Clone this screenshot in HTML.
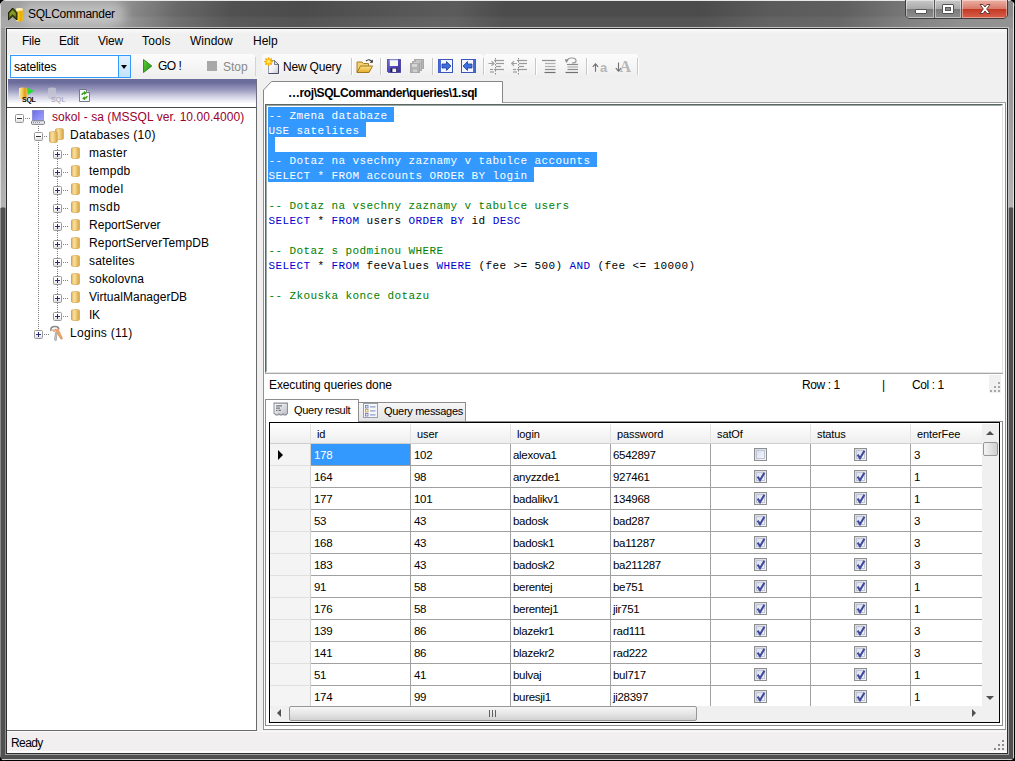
<!DOCTYPE html>
<html><head><meta charset="utf-8"><title>SQLCommander</title>
<style>
*{box-sizing:border-box;margin:0;padding:0}
html,body{width:1015px;height:761px;overflow:hidden;background:#000}
body{font-family:"Liberation Sans",sans-serif;font-size:12px;color:#000;position:relative}
.a{position:absolute}
.menu{position:absolute;top:4px;font-size:12px;line-height:14px;white-space:nowrap}
.ts{position:absolute;top:24px;height:24px;border-radius:3px;background:linear-gradient(180deg,#fcfcfc,#f4f4f4 60%,#eee)}
.sep{position:absolute;top:4px;width:1px;height:17px;background:#c8c8c8;border-right:1px solid #fff;box-sizing:content-box}
.t12{position:absolute;font-size:12px;line-height:14px;white-space:nowrap}
/* tree */
#tree{position:absolute;left:1px;top:77px;width:247px;height:625px;background:#fff;font-size:13px}
.tn{position:absolute;white-space:nowrap;font-size:12px;line-height:14px}
.pm{position:absolute;width:9px;height:9px;border:1px solid #989898;background:linear-gradient(180deg,#fff 0,#fff 45%,#dedede 100%);border-radius:1.5px}
.pm:before{content:"";position:absolute;left:1px;top:3px;width:5px;height:1px;background:#333}
.pm.p:before{background:#2a2a78}
.pm.p:after{content:"";position:absolute;left:3px;top:1px;width:1px;height:5px;background:#2a2a78}
.hd{position:absolute;height:1px;background:repeating-linear-gradient(90deg,#808080 0,#808080 1px,transparent 1px,transparent 2px)}
.vd{position:absolute;width:1px;background:repeating-linear-gradient(180deg,#808080 0,#808080 1px,transparent 1px,transparent 2px)}
.cyl{position:absolute;width:9px;height:12px;border-radius:4.5px/2px;background:linear-gradient(90deg,#e6bc68 0,#f8e0a0 30%,#f2d080 55%,#d8a84c 100%);border:1px solid rgba(200,156,76,.4)}
/* editor */
#ed{position:absolute;font-family:"Liberation Mono",monospace;font-size:11px;line-height:15px;letter-spacing:0.4px;white-space:pre;color:#000}
#ed .l{position:absolute;left:0;height:15px}
#ed .l b{font-weight:normal;position:relative;top:2px;left:.5px}
.k{color:#0000d0}.c{color:#008000}
.sel{background:#3399ff;color:#fff}
/* grid */
#grid{position:absolute;width:731px;height:301px;border:1px solid #000;background:#fff;overflow:hidden;font-size:11px}
.gh{position:absolute;top:1px;height:20px;background:linear-gradient(180deg,#fff,#f6f6f6 50%,#eee);border-right:1px solid #e2e2e2;border-bottom:1px solid #cfcfcf;line-height:21px;padding-left:6px;font-size:11px;letter-spacing:-.1px}
.gr{position:absolute;left:0;height:22px;width:712px}
.gc{position:absolute;top:0;height:22px;border-right:1px solid #a0a0a0;border-bottom:1px solid #a0a0a0;line-height:22px;padding-left:2px;font-size:11.5px;white-space:nowrap;overflow:hidden;letter-spacing:-.3px}
.rh{position:absolute;left:0;top:0;width:41px;height:22px;background:#f4f4f4;border-right:1px solid #d0d0d0;border-bottom:1px solid #e0e0e0}
.cb{position:absolute;left:43px;top:4px;width:13px;height:13px;border:1px solid #8e8f8f;background:linear-gradient(135deg,#d4d6e2,#f6f6fa)}
.cb i{position:absolute;left:1px;top:1px;width:9px;height:9px;border:1px solid #c0c4d8;background:linear-gradient(135deg,#dcdfee,#f4f5fb)}

#frame{position:absolute;left:0;top:0;width:1015px;height:761px;overflow:hidden;border-radius:6px 7px 7px 6px;
 background:linear-gradient(180deg,#9c9c9c 0,#9a9a9a 100px,#b4b4b4 207px,#505050 208px,#505050 100%)}
#titlebar{position:absolute;left:0;top:0;width:1015px;height:28px;
 background:linear-gradient(180deg,rgba(0,0,0,.035) 0,rgba(0,0,0,.035) 55%,rgba(255,255,255,.03) 65%,rgba(255,255,255,.04) 100%),
 linear-gradient(100deg,#a6a6a6 0,#a4a4a4 108px,#8c8c8c 135px,#6c6c6c 175px,#545454 230px,#4e4e4e 300px,#5a5a5a 400px,#5e5e5e 450px,#4e4e4e 500px,#4e4e4e 690px,#5e5e5e 760px,#626262 830px,#7e7e7e 900px,#8c8c8c 950px,#909090 1015px)}
#title{position:absolute;left:29px;top:7px;font-size:12px;line-height:14px;color:#000;white-space:nowrap}
#client{position:absolute;left:7px;top:29px;width:1000px;height:724px;background:linear-gradient(180deg,#fdfdfd 0,#f6f6f6 2px,#f0f0f0 5px,#f0f0f0 100%)}
#ci{position:absolute;left:1px;top:1px;width:999px;height:723px}

</style></head><body>
<div id="frame">
<div id="titlebar"></div>
<!-- frame lines -->
<div class="a" style="left:0;top:0;width:1015px;height:1px;background:#e8e8e8"></div>
<div class="a" style="left:0;top:1px;width:1px;height:207px;background:#dcdcdc"></div>
<div class="a" style="left:0;top:208px;width:1px;height:553px;background:#8c8c8c"></div>
<div class="a" style="left:1014px;top:0;width:1px;height:761px;background:#000"></div>
<div class="a" style="left:1013px;top:1px;width:1px;height:207px;background:#e0e0e0"></div>
<div class="a" style="left:1013px;top:208px;width:1px;height:552px;background:#c8c8c8"></div>
<div class="a" style="left:0;top:760px;width:1015px;height:1px;background:#000"></div>
<div class="a" style="left:1px;top:759px;width:1013px;height:1px;background:#d0d0d0"></div>
<!-- inner bevel -->
<div class="a" style="left:5px;top:27px;width:1004px;height:728px;border:1px solid #c4c4c4;border-left-color:#bdbdbd"></div>
<div class="a" style="left:5px;top:208px;width:1px;height:546px;background:#8a8a8a"></div>
<div class="a" style="left:1008px;top:208px;width:1px;height:546px;background:#a8a8a8"></div>
<div class="a" style="left:5px;top:754px;width:1004px;height:1px;background:#a0a0a0"></div>
<div class="a" style="left:6px;top:28px;width:1002px;height:726px;border:1px solid #2e2e2e"></div>
<!-- title glow + icon + text -->
<div class="a" style="left:22px;top:3px;width:104px;height:22px;border-radius:11px;background:rgba(255,255,255,.32);filter:blur(5px)"></div>
<svg class="a" style="left:8px;top:7px" width="16" height="16" viewBox="0 0 16 16">
 <defs><linearGradient id="ty" x1="0" x2="1"><stop offset="0" stop-color="#fff6c8"/><stop offset=".35" stop-color="#f7c820"/><stop offset=".7" stop-color="#eaa800"/><stop offset="1" stop-color="#e8c030"/></linearGradient></defs>
 <path d="M8 2.5 Q8 1 11.5 1 Q15 1 15 2.5 V13 Q15 14.5 11.5 14.5 Q8 14.5 8 13 Z" fill="url(#ty)"/>
 <ellipse cx="11.5" cy="2.4" rx="3.4" ry="1.3" fill="#fff3c0"/>
 <path d="M0.3 6 L4.6 1 L9 5.5 V13 L4.6 9.2 L0.3 13 Z" fill="#465010" stroke="#161a00" stroke-width="1"/>
 <path d="M1.5 6.5 L4.6 3 L7.6 6.2 V9.5 L4.6 7 L1.5 9.8 Z" fill="#8a9a26"/>
</svg>
<div id="title" style="left:28px;letter-spacing:-.27px">SQLCommander</div>
<!-- caption buttons -->
<div class="a" style="left:905px;top:-1px;width:103px;height:20px;border:1px solid #3c3c3c;border-radius:0 0 5px 5px;overflow:hidden;background:#555">
 <div class="a" style="left:0;top:0;width:28px;height:18px;background:linear-gradient(180deg,#c8c8c8 0,#aaa 48%,#7a7a7a 52%,#8e8e8e 100%);box-shadow:inset 0 0 0 1px rgba(255,255,255,.45)"></div>
 <div class="a" style="left:29px;top:0;width:26px;height:18px;background:linear-gradient(180deg,#c8c8c8 0,#aaa 48%,#7a7a7a 52%,#8e8e8e 100%);box-shadow:inset 0 0 0 1px rgba(255,255,255,.45)"></div>
 <div class="a" style="left:56px;top:0;width:45px;height:18px;background:linear-gradient(180deg,#eeb0a4 0,#d87c6c 48%,#c23a24 52%,#d8604a 100%);box-shadow:inset 0 0 0 1px rgba(255,255,255,.4)"></div>
 <div class="a" style="left:9px;top:9px;width:12px;height:5px;background:#fff;border:1px solid #555;border-radius:1px"></div>
 <div class="a" style="left:36px;top:4px;width:12px;height:10px;background:#fff;border:1px solid #555;border-radius:1px"></div>
 <div class="a" style="left:39px;top:7px;width:6px;height:4px;background:#8a8a8a;border:1px solid #555"></div>
 <svg class="a" style="left:72px;top:3px" width="14" height="12" viewBox="0 0 14 12"><path d="M2 1.5 L5 1.5 L7 4 L9 1.5 L12 1.5 L8.7 6 L12 10.5 L9 10.5 L7 8 L5 10.5 L2 10.5 L5.3 6 Z" fill="#fff" stroke="#5a3030" stroke-width=".9"/></svg>
</div>

<div id="client"><div id="ci">
<div class="menu" style="left:14px;letter-spacing:-.25px">File</div>
<div class="menu" style="left:51px;letter-spacing:-.25px">Edit</div>
<div class="menu" style="left:90px;letter-spacing:-.2px">View</div>
<div class="menu" style="left:134px;letter-spacing:.15px">Tools</div>
<div class="menu" style="left:182px">Window</div>
<div class="menu" style="left:245px">Help</div>
<div class="ts" style="left:0;width:247px"></div>
<div class="a" style="left:2px;top:25px;width:121px;height:23px;border:1px solid #3399ff;background:#fff"></div>
<div class="a" style="left:110px;top:25px;width:13px;height:23px;border:1px solid #3399ff;background:linear-gradient(180deg,#e4f2fd,#c2e2fb)"></div>
<div class="a" style="left:113px;top:35px;width:0;height:0;border-left:3.5px solid transparent;border-right:3.5px solid transparent;border-top:4px solid #000"></div>
<div class="t12" style="left:6px;top:30px;letter-spacing:-.2px">satelites</div>
<svg class="a" style="left:135px;top:29px" width="10" height="14" viewBox="0 0 10 14"><defs><linearGradient id="gg" x1="0" y1="0" x2="1" y2="1"><stop offset="0" stop-color="#5fd03a"/><stop offset="1" stop-color="#1f8a12"/></linearGradient></defs><path d="M0.5 0.5 L8.8 7 L0.5 13.5 Z" fill="url(#gg)" stroke="#2f8f20" stroke-width="1"/></svg>
<div class="t12" style="left:150px;top:29px;letter-spacing:-.5px">GO !</div>
<div class="a" style="left:199px;top:31px;width:10px;height:10px;background:#a8a8a8"></div>
<div class="t12" style="left:215px;top:30px;color:#8a8a8a">Stop</div>
<div class="ts" style="left:254px;width:221px"></div>
<div class="ts" style="left:476px;width:154px"></div>
<div class="t12" style="left:275px;top:30px;letter-spacing:-.2px">New Query</div>
<div class="sep" style="left:343px;top:28px"></div>
<div class="sep" style="left:372px;top:28px"></div>
<div class="sep" style="left:424px;top:28px"></div>
<div class="sep" style="left:475px;top:28px"></div>
<div class="sep" style="left:527px;top:28px"></div>
<div class="sep" style="left:578px;top:28px"></div>
<div class="sep" style="left:629px;top:28px"></div>
<!-- toolbar icons (client-inner coords = target - (8,30)) -->
<!-- new query -->
<svg class="a" style="left:256px;top:27px" width="17" height="18" viewBox="0 0 17 18">
 <defs><linearGradient id="pg" x1="0" y1="0" x2="1" y2="1"><stop offset="0" stop-color="#fff"/><stop offset=".55" stop-color="#f2f2f6"/><stop offset="1" stop-color="#c4c4d4"/></linearGradient></defs>
 <path d="M4.5 3.5 H10.5 L14.5 7.5 V16.5 H4.5 Z" fill="url(#pg)" stroke="#9aa0b0" stroke-width="1"/>
 <path d="M10.5 3.5 L14.5 7.5 V16.5 H4.5" fill="none" stroke="#4a4e68" stroke-width="1"/>
 <path d="M10.5 3.8 V7.5 H14.2" fill="#e0e0ec" stroke="#5a5e78" stroke-width=".8"/>
 <g stroke="#f6a400" stroke-width="1.7" stroke-linecap="round"><path d="M4.6 1 V8.2"/><path d="M1 4.6 H8.2"/><path d="M2 2 L7.2 7.2"/><path d="M7.2 2 L2 7.2"/></g>
 <circle cx="4.6" cy="4.6" r="2.7" fill="#fbc21a"/><circle cx="4.6" cy="4.6" r="1.5" fill="#fff060"/>
</svg>
<!-- open folder -->
<svg class="a" style="left:348px;top:28px" width="18" height="16" viewBox="0 0 18 16">
 <defs><linearGradient id="fo" x1="0" y1="0" x2="0" y2="1"><stop offset="0" stop-color="#fbe28a"/><stop offset="1" stop-color="#e8ac28"/></linearGradient></defs>
 <path d="M1 14.5 V4 H6 L7.5 5.5 H12.5 V8" fill="#f2d070" stroke="#a88028" stroke-width="1"/>
 <path d="M1 14.5 L4.5 8 H16.5 L13 14.5 Z" fill="url(#fo)" stroke="#a07820" stroke-width="1"/>
 <path d="M10 3.2 Q13 0.2 15.8 3.4" fill="none" stroke="#333" stroke-width="1.2"/>
 <path d="M16.8 1.5 V4.8 H13.6 Z" fill="#333"/>
</svg>
<!-- save -->
<svg class="a" style="left:379px;top:29px" width="14" height="14" viewBox="0 0 14 14">
 <defs><linearGradient id="sv" x1="0" y1="0" x2="1" y2="1"><stop offset="0" stop-color="#7a72d8"/><stop offset=".5" stop-color="#5048b8"/><stop offset="1" stop-color="#382e98"/></linearGradient></defs>
 <path d="M0.4 0.4 H13.6 V13.6 H1.6 L0.4 12.4 Z" fill="url(#sv)" stroke="#3a3296" stroke-width=".8"/>
 <rect x="2.8" y="0.8" width="8.2" height="6.2" fill="#f4f8f0"/><rect x="2.8" y="0.8" width="8.2" height="1.2" fill="#d8dcf0"/>
 <rect x="3.6" y="9.2" width="6.4" height="4" fill="#1a1a40"/><rect x="5.4" y="9.6" width="3.8" height="3.4" fill="#eeeefc"/>
</svg>
<!-- save all (disabled) -->
<svg class="a" style="left:402px;top:29px" width="14" height="14" viewBox="0 0 14 14">
 <rect x="4.5" y="0.5" width="9" height="9" fill="#b4b4b4" stroke="#a8a8a8"/>
 <rect x="2.5" y="2.5" width="9" height="9" fill="#bcbcbc" stroke="#aaa"/>
 <rect x="0.5" y="4.5" width="9" height="9" fill="#b2b2b2" stroke="#a6a6a6"/>
 <rect x="2" y="5" width="5" height="3" fill="#d6d6d6"/><rect x="3" y="10.5" width="4" height="2.6" fill="#d0d0d0"/>
 <rect x="6" y="1.4" width="5" height="1.2" fill="#d2d2d2"/><rect x="4" y="3.2" width="5" height="1" fill="#d2d2d2"/>
</svg>
<!-- arrow right box -->
<svg class="a" style="left:430px;top:29px" width="15" height="14" viewBox="0 0 15 14">
 <rect x="0.5" y="0.5" width="14" height="13" fill="#f4f6ff" stroke="#3a55b8"/>
 <rect x="0.5" y="0.5" width="2.5" height="13" fill="#4a6ad8"/>
 <path d="M4 5 H8.5 V2.5 L13 7 L8.5 11.5 V9 H4 Z" fill="#3b6fe0" stroke="#1e3c98" stroke-width=".8"/>
</svg>
<!-- arrow left box -->
<svg class="a" style="left:453px;top:29px" width="15" height="14" viewBox="0 0 15 14">
 <rect x="0.5" y="0.5" width="14" height="13" fill="#f4f6ff" stroke="#3a55b8"/>
 <rect x="12" y="0.5" width="2.5" height="13" fill="#4a6ad8"/>
 <path d="M11 5 H6.5 V2.5 L2 7 L6.5 11.5 V9 H11 Z" fill="#3b6fe0" stroke="#1e3c98" stroke-width=".8"/>
</svg>
<!-- indent -->
<svg class="a" style="left:480px;top:28px" width="17" height="17" viewBox="0 0 17 17">
 <g stroke="#9a9a9a" stroke-width="1.2"><path d="M6 2.5 H16"/><path d="M8 5.5 H16"/><path d="M8 8.5 H13"/><path d="M6 11.5 H16"/><path d="M2 11.5 H5"/><path d="M2 14 H6"/></g>
 <path d="M7.5 0 V17" stroke="#8a8a8a" stroke-width="1" stroke-dasharray="1.5 1.5"/>
 <path d="M0.5 5.5 H6 M3.5 3.3 L6 5.5 L3.5 7.7" fill="none" stroke="#a0a0a0" stroke-width="1.2"/>
</svg>
<svg class="a" style="left:503px;top:28px" width="17" height="17" viewBox="0 0 17 17">
 <g stroke="#9a9a9a" stroke-width="1.2"><path d="M6 2.5 H16"/><path d="M8 5.5 H16"/><path d="M8 8.5 H13"/><path d="M6 11.5 H16"/><path d="M2 11.5 H5"/><path d="M2 14 H6"/></g>
 <path d="M7.5 0 V17" stroke="#8a8a8a" stroke-width="1" stroke-dasharray="1.5 1.5"/>
 <path d="M0.5 5.5 H6 M3 3.3 L0.5 5.5 L3 7.7" fill="none" stroke="#a0a0a0" stroke-width="1.2"/>
</svg>
<!-- comment -->
<svg class="a" style="left:534px;top:29px" width="14" height="15" viewBox="0 0 14 15">
 <g stroke="#8c8c8c" stroke-width="1.2"><path d="M0 1.5 H13.5"/><path d="M3 4.5 H13.5" stroke="#b0b0b0"/><path d="M3 7.5 H13.5" stroke="#b0b0b0"/><path d="M3 10.5 H13.5"/><path d="M2.5 13.5 H13.5" stroke="#707070"/></g>
</svg>
<!-- uncomment -->
<svg class="a" style="left:556px;top:27px" width="15" height="18" viewBox="0 0 15 18">
 <path d="M3 4.5 Q3.5 0.8 8 1 Q12.5 1.2 12 4.5 Q11.5 6 8 6" fill="none" stroke="#9a9a9a" stroke-width="1.2"/>
 <path d="M0.8 2.2 L4.8 2.6 L2.2 6 Z" fill="#8a8a8a"/>
 <g stroke="#8c8c8c" stroke-width="1.2"><path d="M3 7.5 H14"/><path d="M3.5 10 H14" stroke="#b0b0b0"/><path d="M3.5 12.5 H14"/><path d="M1.5 15.5 H14" stroke="#707070"/></g>
</svg>
<!-- case up/down -->
<svg class="a" style="left:584px;top:33px" width="7" height="10" viewBox="0 0 7 10"><path d="M3.5 1 V8.8 M0.8 3.8 L3.5 0.8 L6.2 3.8" fill="none" stroke="#707070" stroke-width="1.1"/></svg>
<div class="a" style="left:592px;top:30px;font-family:'Liberation Sans',sans-serif;font-weight:bold;font-size:13px;line-height:16px;color:#b6b6b6">a</div>
<svg class="a" style="left:607px;top:32px" width="7" height="10" viewBox="0 0 7 10"><path d="M3.5 0.5 V9 M0.8 6.2 L3.5 9.2 L6.2 6.2" fill="none" stroke="#707070" stroke-width="1.1"/></svg>
<div class="a" style="left:611.5px;top:28px;font-family:'Liberation Serif',serif;font-weight:bold;font-size:16px;line-height:18px;color:#b6b6b6">A</div>

<div class="a" style="left:0;top:49px;width:249px;height:28px;background:linear-gradient(180deg,#6a6a98 0,#6e6e9e 14%,#9c9cc0 40%,#cfcfe2 62%,#f0f0f8 80%,#fff 88%)"></div>
<div class="a" style="left:248px;top:49px;width:1px;height:29px;background:#6e6e7e"></div>
<div class="a" style="left:247px;top:27px;width:1px;height:19px;background:#d4d4d4"></div>
<div class="a" style="left:-1px;top:77px;width:250px;height:624px;border:1px solid #6a6a6a;border-top-color:#4a4a4a;border-left:none;background:#fff"></div>
<!-- left header icons -->
<svg class="a" style="left:10px;top:57px" width="18" height="14" viewBox="0 0 18 14">
 <defs><linearGradient id="cy1" x1="0" x2="1"><stop offset="0" stop-color="#fbeeb0"/><stop offset=".45" stop-color="#f2c850"/><stop offset=".75" stop-color="#e09818"/><stop offset="1" stop-color="#eec050"/></linearGradient></defs>
 <path d="M1 2 Q1 0.6 5 0.6 Q9 0.6 9 2 V10.5 Q9 12 5 12 Q1 12 1 10.5 Z" fill="url(#cy1)"/>
 <path d="M10.2 1.4 L15.4 4.2 L10.2 7 Z" fill="#22e030" stroke="#22e030" stroke-width=".8" stroke-linejoin="round"/>
</svg>
<div class="a" style="left:14px;top:65px;font-size:7px;line-height:9px;font-weight:bold;letter-spacing:-.25px;color:#000;text-shadow:0 0 1px #fff">SQL</div>
<svg class="a" style="left:39px;top:57px" width="12" height="14" viewBox="0 0 12 14">
 <path d="M1 2 Q1 0.6 5 0.6 Q9 0.6 9 2 V10.5 Q9 12 5 12 Q1 12 1 10.5 Z" fill="#c4c4d2" opacity=".8"/>
</svg>
<div class="a" style="left:43px;top:65px;font-size:7px;line-height:9px;font-weight:normal;letter-spacing:.2px;color:#9c9cae">SQL</div>
<svg class="a" style="left:71px;top:59px" width="12" height="14" viewBox="0 0 12 14">
 <path d="M0.5 0.5 H7.5 L10.5 3.5 V12.5 H0.5 Z" fill="#f6f6fa" stroke="#687080" stroke-width=".9"/>
 <path d="M7.5 0.5 V3.5 H10.5" fill="#dcdce6" stroke="#687080" stroke-width=".9"/>
 <path d="M3 6 Q3.2 3.6 6 3.8 M5 2.6 L6.8 3.9 L5 5.2" fill="none" stroke="#38a018" stroke-width="1.3"/>
 <path d="M8 7 Q7.8 9.6 5 9.4 M6 10.6 L4.2 9.3 L6 8" fill="none" stroke="#38a018" stroke-width="1.3"/>
</svg>

<div class="vd" style="left:30px;top:96px;height:204px"></div>
<div class="vd" style="left:49px;top:115px;height:167px"></div>
<div class="hd" style="left:17px;top:88px;width:6px"></div>
<div class="pm" style="left:7px;top:84px"></div>
<svg class="a" style="left:23px;top:80px" width="14" height="15" viewBox="0 0 14 15"><defs><linearGradient id="scr" x1="0" y1="0" x2="1" y2="1"><stop offset="0" stop-color="#6a6ae6"/><stop offset="1" stop-color="#a4a4ff"/></linearGradient></defs><rect x="1.3" y="0.3" width="11.4" height="10" fill="url(#scr)" stroke="#7a84c8" stroke-width=".6"/><rect x="0.5" y="10.8" width="13" height="3.6" rx="1" fill="#e8e8ee" stroke="#70747c" stroke-width=".9"/><path d="M2 12.6 H9" stroke="#8a8e98" stroke-width="1" stroke-dasharray="1 1"/></svg>
<div class="tn" style="left:44px;top:80px;letter-spacing:0.06px;color:#99002e">sokol - sa (MSSQL ver. 10.00.4000)</div>
<div class="hd" style="left:36px;top:106px;width:4px"></div>
<div class="pm" style="left:26px;top:102px"></div>
<div class="tn" style="left:62px;top:98px;letter-spacing:0.26px">Databases (10)</div>
<div class="cyl" style="left:47px;top:98px"></div><div class="cyl" style="left:41px;top:101px"></div>
<div class="hd" style="left:55px;top:124px;width:6px"></div>
<div class="pm p" style="left:45px;top:120px"></div>
<div class="cyl" style="left:63px;top:117px"></div>
<div class="tn" style="left:81px;top:116px;letter-spacing:0.25px">master</div>
<div class="hd" style="left:55px;top:142px;width:6px"></div>
<div class="pm p" style="left:45px;top:138px"></div>
<div class="cyl" style="left:63px;top:135px"></div>
<div class="tn" style="left:81px;top:134px;letter-spacing:0.25px">tempdb</div>
<div class="hd" style="left:55px;top:160px;width:6px"></div>
<div class="pm p" style="left:45px;top:156px"></div>
<div class="cyl" style="left:63px;top:153px"></div>
<div class="tn" style="left:81px;top:152px;letter-spacing:0.34px">model</div>
<div class="hd" style="left:55px;top:178px;width:6px"></div>
<div class="pm p" style="left:45px;top:174px"></div>
<div class="cyl" style="left:63px;top:171px"></div>
<div class="tn" style="left:81px;top:170px;letter-spacing:0.56px">msdb</div>
<div class="hd" style="left:55px;top:196px;width:6px"></div>
<div class="pm p" style="left:45px;top:192px"></div>
<div class="cyl" style="left:63px;top:189px"></div>
<div class="tn" style="left:81px;top:188px;letter-spacing:0.02px">ReportServer</div>
<div class="hd" style="left:55px;top:214px;width:6px"></div>
<div class="pm p" style="left:45px;top:210px"></div>
<div class="cyl" style="left:63px;top:207px"></div>
<div class="tn" style="left:81px;top:206px;letter-spacing:0.16px">ReportServerTempDB</div>
<div class="hd" style="left:55px;top:232px;width:6px"></div>
<div class="pm p" style="left:45px;top:228px"></div>
<div class="cyl" style="left:63px;top:225px"></div>
<div class="tn" style="left:81px;top:224px;letter-spacing:0.19px">satelites</div>
<div class="hd" style="left:55px;top:250px;width:6px"></div>
<div class="pm p" style="left:45px;top:246px"></div>
<div class="cyl" style="left:63px;top:243px"></div>
<div class="tn" style="left:81px;top:242px;letter-spacing:0.11px">sokolovna</div>
<div class="hd" style="left:55px;top:268px;width:6px"></div>
<div class="pm p" style="left:45px;top:264px"></div>
<div class="cyl" style="left:63px;top:261px"></div>
<div class="tn" style="left:81px;top:260px;letter-spacing:0.02px">VirtualManagerDB</div>
<div class="hd" style="left:55px;top:286px;width:6px"></div>
<div class="pm p" style="left:45px;top:282px"></div>
<div class="cyl" style="left:63px;top:279px"></div>
<div class="tn" style="left:81px;top:278px;letter-spacing:-0.26px">IK</div>
<div class="hd" style="left:36px;top:304px;width:6px"></div>
<div class="pm p" style="left:26px;top:300px"></div>
<svg class="a" style="left:41px;top:295px" width="15" height="17" viewBox="0 0 15 17"><path d="M2 6 Q1 1.5 6 1.5 Q10.5 1.5 9.5 5" fill="none" stroke="#8a8a8a" stroke-width="1.6"/><path d="M3.5 4.5 L6.5 7.5 L5.5 15 L7.2 15.5 L8 8" fill="#c8ccd2" stroke="#9a9ea6" stroke-width=".8"/><path d="M6 4 L10 6 L13.5 13.5 L12 14.2 L8 8 Z" fill="#f0a868" stroke="#d08850" stroke-width=".7"/><circle cx="5" cy="5.5" r="1.6" fill="#e8b090"/><circle cx="8.5" cy="5" r="1.5" fill="#f4a070"/></svg>
<div class="tn" style="left:62px;top:296px;letter-spacing:0.3px">Logins (11)</div>
<div class="a" style="left:-8px;top:-30px;width:0;height:0">
<div class="a" style="left:263px;top:102px;width:743px;height:628px;background:#fff;border:1px solid #919191;border-top:none"></div>
<div class="a" style="left:502px;top:102px;width:504px;height:1px;background:#a0a0a0"></div>
<svg class="a" style="left:263px;top:81px" width="241" height="22" viewBox="0 0 241 22"><path d="M0.5 22 V9 L8.5 0.5 H239.5 V22 Z" fill="#fff" stroke="#868686"/></svg>
<div class="a" style="left:264px;top:102px;width:238px;height:1px;background:#fff"></div>
<div class="a" style="left:288px;top:86px;font-weight:bold;font-size:12px;line-height:14px;white-space:nowrap;letter-spacing:-0.42px">…roj\SQLCommander\queries\1.sql</div>
<div class="a" style="left:265px;top:104px;width:738px;height:269px;border:1px solid #5e6660;border-right-color:#e3e3e3;border-bottom-color:#e3e3e3;background:#fff"></div>
<div class="a" style="left:266px;top:105px;width:736px;height:267px;border:1px solid #9aa8a8;border-right-color:#fff;border-bottom-color:#fff"></div>
<div id="ed" style="left:268px;top:107px;width:730px;height:264px">
<div class="l sel" style="top:0px;width:126px"><b>-- Zmena databaze</b></div>
<div class="l sel" style="top:15px;width:98px"><b>USE satelites</b></div>
<div class="l sel" style="top:30px;width:7px"><b></b></div>
<div class="l sel" style="top:45px;width:329px"><b>-- Dotaz na vsechny zaznamy v tabulce accounts</b></div>
<div class="l sel" style="top:60px;width:266px"><b>SELECT * FROM accounts ORDER BY login</b></div>
<div class="l" style="top:90px"><b><span class="c">-- Dotaz na vsechny zaznamy v tabulce users</span></b></div>
<div class="l" style="top:105px"><b><span class="k">SELECT</span> * <span class="k">FROM</span> users <span class="k">ORDER</span> <span class="k">BY</span> id <span class="k">DESC</span></b></div>
<div class="l" style="top:135px"><b><span class="c">-- Dotaz s podminou WHERE</span></b></div>
<div class="l" style="top:150px"><b><span class="k">SELECT</span> * <span class="k">FROM</span> feeValues <span class="k">WHERE</span> (fee &gt;= 500) <span class="k">AND</span> (fee &lt;= 10000)</b></div>
<div class="l" style="top:180px"><b><span class="c">-- Zkouska konce dotazu</span></b></div>
</div>
<div class="a" style="left:265px;top:373px;width:738px;height:1px;background:#a8a8a8"></div>
<div class="a" style="left:989px;top:375px;width:12px;height:18px;background:#f1f1f1"></div>
<div class="a" style="left:998px;top:382px;width:2px;height:2px;background:#a6a6a6"></div>
<div class="a" style="left:994px;top:386px;width:2px;height:2px;background:#a6a6a6"></div>
<div class="a" style="left:998px;top:386px;width:2px;height:2px;background:#a6a6a6"></div>
<div class="a" style="left:990px;top:390px;width:2px;height:2px;background:#a6a6a6"></div>
<div class="a" style="left:994px;top:390px;width:2px;height:2px;background:#a6a6a6"></div>
<div class="a" style="left:998px;top:390px;width:2px;height:2px;background:#a6a6a6"></div>
<div class="t12" style="left:269px;top:378px;letter-spacing:-.12px">Executing queries done</div>
<div class="t12" style="left:802px;top:378px;letter-spacing:-.4px">Row : 1</div>
<div class="t12" style="left:882px;top:378px">|</div>
<div class="t12" style="left:912px;top:378px;letter-spacing:-.4px">Col : 1</div>
<div class="a" style="left:265px;top:421px;width:738px;height:305px;border:1px solid #8c8c8c;background:#fff"></div>
<div class="a" style="left:358px;top:402px;width:108px;height:19px;border:1px solid #8c8c8c;border-bottom:none;background:linear-gradient(180deg,#f6f6f6,#e4e4e4)"></div>
<div class="a" style="left:265px;top:399px;width:94px;height:23px;border:1px solid #8c8c8c;border-bottom:none;background:#fff"></div>
<svg class="a" style="left:273px;top:402px" width="16" height="14" viewBox="0 0 16 12.5" preserveAspectRatio="none"><defs><linearGradient id="ti1" x1="0" y1="0" x2="1" y2="1"><stop offset="0" stop-color="#fff"/><stop offset="1" stop-color="#b8bcc4"/></linearGradient></defs><path d="M1 1 H14.5 V10 L13 11.5 H11 L10 10.5 L9 11.5 H7 L6 10.5 L5 11.5 H3 L1 10 Z" fill="url(#ti1)" stroke="#8a8e96" stroke-width="1"/><path d="M3 3.5 H9 M3 5.5 H7 M3 7.5 H4.5 M5.5 7.5 H8" stroke="#707680" stroke-width="1"/></svg>
<svg class="a" style="left:363px;top:403px" width="15" height="15" viewBox="0 0 15 15"><rect x="0.5" y="0.5" width="14" height="14" fill="#f4f6fa" stroke="#9aa0a8"/><g fill="#e8ecf8" stroke="#6a78c0" stroke-width=".8"><rect x="2.5" y="2.5" width="2.5" height="2.5"/><rect x="2.5" y="6.5" width="2.5" height="2.5" stroke="#c8a040" fill="#fff0c0"/><rect x="2.5" y="10.5" width="2.5" height="2.5"/></g><path d="M7 3.8 H12.5 M7 7.8 H12.5 M7 11.8 H12.5" stroke="#8ea0d0" stroke-width="1.2"/></svg>
<div class="a" style="left:294px;top:404px;font-size:11px;line-height:13px;white-space:nowrap;letter-spacing:-.3px">Query result</div>
<div class="a" style="left:384px;top:405px;font-size:11px;line-height:13px;white-space:nowrap;letter-spacing:-.3px">Query messages</div>
<div id="grid" style="left:269px;top:422px">
<div class="gh" style="left:0px;width:41px"></div>
<div class="gh" style="left:41px;width:100px">id</div>
<div class="gh" style="left:141px;width:100px">user</div>
<div class="gh" style="left:241px;width:100px">login</div>
<div class="gh" style="left:341px;width:100px">password</div>
<div class="gh" style="left:441px;width:100px">satOf</div>
<div class="gh" style="left:541px;width:100px">status</div>
<div class="gh" style="left:641px;width:100px">enterFee</div>
<div class="gr" style="top:21px">
<div class="rh"></div>
<div class="gc sel" style="left:41px;width:100px;padding-left:3px">178</div>
<div class="gc" style="left:141px;width:100px;padding-left:3px">102</div>
<div class="gc" style="left:241px;width:100px">alexova1</div>
<div class="gc" style="left:341px;width:100px">6542897</div>
<div class="gc" style="left:441px;width:100px"><div class="cb"><i></i></div></div>
<div class="gc" style="left:541px;width:100px"><div class="cb"><i></i><svg class="a" style="left:1px;top:1px" width="10" height="10" viewBox="0 0 10 10"><path d="M1.6 4.6 L4 8.2 L8.4 0.8" fill="none" stroke="#3f4c9c" stroke-width="2.1"/></svg></div></div>
<div class="gc" style="left:641px;width:100px;padding-left:3px">3</div>
</div>
<div class="gr" style="top:43px">
<div class="rh"></div>
<div class="gc" style="left:41px;width:100px;padding-left:3px">164</div>
<div class="gc" style="left:141px;width:100px;padding-left:3px">98</div>
<div class="gc" style="left:241px;width:100px">anyzzde1</div>
<div class="gc" style="left:341px;width:100px">927461</div>
<div class="gc" style="left:441px;width:100px"><div class="cb"><i></i><svg class="a" style="left:1px;top:1px" width="10" height="10" viewBox="0 0 10 10"><path d="M1.6 4.6 L4 8.2 L8.4 0.8" fill="none" stroke="#3f4c9c" stroke-width="2.1"/></svg></div></div>
<div class="gc" style="left:541px;width:100px"><div class="cb"><i></i><svg class="a" style="left:1px;top:1px" width="10" height="10" viewBox="0 0 10 10"><path d="M1.6 4.6 L4 8.2 L8.4 0.8" fill="none" stroke="#3f4c9c" stroke-width="2.1"/></svg></div></div>
<div class="gc" style="left:641px;width:100px;padding-left:3px">1</div>
</div>
<div class="gr" style="top:65px">
<div class="rh"></div>
<div class="gc" style="left:41px;width:100px;padding-left:3px">177</div>
<div class="gc" style="left:141px;width:100px;padding-left:3px">101</div>
<div class="gc" style="left:241px;width:100px">badalikv1</div>
<div class="gc" style="left:341px;width:100px">134968</div>
<div class="gc" style="left:441px;width:100px"><div class="cb"><i></i><svg class="a" style="left:1px;top:1px" width="10" height="10" viewBox="0 0 10 10"><path d="M1.6 4.6 L4 8.2 L8.4 0.8" fill="none" stroke="#3f4c9c" stroke-width="2.1"/></svg></div></div>
<div class="gc" style="left:541px;width:100px"><div class="cb"><i></i><svg class="a" style="left:1px;top:1px" width="10" height="10" viewBox="0 0 10 10"><path d="M1.6 4.6 L4 8.2 L8.4 0.8" fill="none" stroke="#3f4c9c" stroke-width="2.1"/></svg></div></div>
<div class="gc" style="left:641px;width:100px;padding-left:3px">1</div>
</div>
<div class="gr" style="top:87px">
<div class="rh"></div>
<div class="gc" style="left:41px;width:100px;padding-left:3px">53</div>
<div class="gc" style="left:141px;width:100px;padding-left:3px">43</div>
<div class="gc" style="left:241px;width:100px">badosk</div>
<div class="gc" style="left:341px;width:100px">bad287</div>
<div class="gc" style="left:441px;width:100px"><div class="cb"><i></i><svg class="a" style="left:1px;top:1px" width="10" height="10" viewBox="0 0 10 10"><path d="M1.6 4.6 L4 8.2 L8.4 0.8" fill="none" stroke="#3f4c9c" stroke-width="2.1"/></svg></div></div>
<div class="gc" style="left:541px;width:100px"><div class="cb"><i></i><svg class="a" style="left:1px;top:1px" width="10" height="10" viewBox="0 0 10 10"><path d="M1.6 4.6 L4 8.2 L8.4 0.8" fill="none" stroke="#3f4c9c" stroke-width="2.1"/></svg></div></div>
<div class="gc" style="left:641px;width:100px;padding-left:3px">3</div>
</div>
<div class="gr" style="top:109px">
<div class="rh"></div>
<div class="gc" style="left:41px;width:100px;padding-left:3px">168</div>
<div class="gc" style="left:141px;width:100px;padding-left:3px">43</div>
<div class="gc" style="left:241px;width:100px">badosk1</div>
<div class="gc" style="left:341px;width:100px">ba11287</div>
<div class="gc" style="left:441px;width:100px"><div class="cb"><i></i><svg class="a" style="left:1px;top:1px" width="10" height="10" viewBox="0 0 10 10"><path d="M1.6 4.6 L4 8.2 L8.4 0.8" fill="none" stroke="#3f4c9c" stroke-width="2.1"/></svg></div></div>
<div class="gc" style="left:541px;width:100px"><div class="cb"><i></i><svg class="a" style="left:1px;top:1px" width="10" height="10" viewBox="0 0 10 10"><path d="M1.6 4.6 L4 8.2 L8.4 0.8" fill="none" stroke="#3f4c9c" stroke-width="2.1"/></svg></div></div>
<div class="gc" style="left:641px;width:100px;padding-left:3px">3</div>
</div>
<div class="gr" style="top:131px">
<div class="rh"></div>
<div class="gc" style="left:41px;width:100px;padding-left:3px">183</div>
<div class="gc" style="left:141px;width:100px;padding-left:3px">43</div>
<div class="gc" style="left:241px;width:100px">badosk2</div>
<div class="gc" style="left:341px;width:100px">ba211287</div>
<div class="gc" style="left:441px;width:100px"><div class="cb"><i></i><svg class="a" style="left:1px;top:1px" width="10" height="10" viewBox="0 0 10 10"><path d="M1.6 4.6 L4 8.2 L8.4 0.8" fill="none" stroke="#3f4c9c" stroke-width="2.1"/></svg></div></div>
<div class="gc" style="left:541px;width:100px"><div class="cb"><i></i><svg class="a" style="left:1px;top:1px" width="10" height="10" viewBox="0 0 10 10"><path d="M1.6 4.6 L4 8.2 L8.4 0.8" fill="none" stroke="#3f4c9c" stroke-width="2.1"/></svg></div></div>
<div class="gc" style="left:641px;width:100px;padding-left:3px">3</div>
</div>
<div class="gr" style="top:153px">
<div class="rh"></div>
<div class="gc" style="left:41px;width:100px;padding-left:3px">91</div>
<div class="gc" style="left:141px;width:100px;padding-left:3px">58</div>
<div class="gc" style="left:241px;width:100px">berentej</div>
<div class="gc" style="left:341px;width:100px">be751</div>
<div class="gc" style="left:441px;width:100px"><div class="cb"><i></i><svg class="a" style="left:1px;top:1px" width="10" height="10" viewBox="0 0 10 10"><path d="M1.6 4.6 L4 8.2 L8.4 0.8" fill="none" stroke="#3f4c9c" stroke-width="2.1"/></svg></div></div>
<div class="gc" style="left:541px;width:100px"><div class="cb"><i></i><svg class="a" style="left:1px;top:1px" width="10" height="10" viewBox="0 0 10 10"><path d="M1.6 4.6 L4 8.2 L8.4 0.8" fill="none" stroke="#3f4c9c" stroke-width="2.1"/></svg></div></div>
<div class="gc" style="left:641px;width:100px;padding-left:3px">1</div>
</div>
<div class="gr" style="top:175px">
<div class="rh"></div>
<div class="gc" style="left:41px;width:100px;padding-left:3px">176</div>
<div class="gc" style="left:141px;width:100px;padding-left:3px">58</div>
<div class="gc" style="left:241px;width:100px">berentej1</div>
<div class="gc" style="left:341px;width:100px">jir751</div>
<div class="gc" style="left:441px;width:100px"><div class="cb"><i></i><svg class="a" style="left:1px;top:1px" width="10" height="10" viewBox="0 0 10 10"><path d="M1.6 4.6 L4 8.2 L8.4 0.8" fill="none" stroke="#3f4c9c" stroke-width="2.1"/></svg></div></div>
<div class="gc" style="left:541px;width:100px"><div class="cb"><i></i><svg class="a" style="left:1px;top:1px" width="10" height="10" viewBox="0 0 10 10"><path d="M1.6 4.6 L4 8.2 L8.4 0.8" fill="none" stroke="#3f4c9c" stroke-width="2.1"/></svg></div></div>
<div class="gc" style="left:641px;width:100px;padding-left:3px">1</div>
</div>
<div class="gr" style="top:197px">
<div class="rh"></div>
<div class="gc" style="left:41px;width:100px;padding-left:3px">139</div>
<div class="gc" style="left:141px;width:100px;padding-left:3px">86</div>
<div class="gc" style="left:241px;width:100px">blazekr1</div>
<div class="gc" style="left:341px;width:100px">rad111</div>
<div class="gc" style="left:441px;width:100px"><div class="cb"><i></i><svg class="a" style="left:1px;top:1px" width="10" height="10" viewBox="0 0 10 10"><path d="M1.6 4.6 L4 8.2 L8.4 0.8" fill="none" stroke="#3f4c9c" stroke-width="2.1"/></svg></div></div>
<div class="gc" style="left:541px;width:100px"><div class="cb"><i></i><svg class="a" style="left:1px;top:1px" width="10" height="10" viewBox="0 0 10 10"><path d="M1.6 4.6 L4 8.2 L8.4 0.8" fill="none" stroke="#3f4c9c" stroke-width="2.1"/></svg></div></div>
<div class="gc" style="left:641px;width:100px;padding-left:3px">3</div>
</div>
<div class="gr" style="top:219px">
<div class="rh"></div>
<div class="gc" style="left:41px;width:100px;padding-left:3px">141</div>
<div class="gc" style="left:141px;width:100px;padding-left:3px">86</div>
<div class="gc" style="left:241px;width:100px">blazekr2</div>
<div class="gc" style="left:341px;width:100px">rad222</div>
<div class="gc" style="left:441px;width:100px"><div class="cb"><i></i><svg class="a" style="left:1px;top:1px" width="10" height="10" viewBox="0 0 10 10"><path d="M1.6 4.6 L4 8.2 L8.4 0.8" fill="none" stroke="#3f4c9c" stroke-width="2.1"/></svg></div></div>
<div class="gc" style="left:541px;width:100px"><div class="cb"><i></i><svg class="a" style="left:1px;top:1px" width="10" height="10" viewBox="0 0 10 10"><path d="M1.6 4.6 L4 8.2 L8.4 0.8" fill="none" stroke="#3f4c9c" stroke-width="2.1"/></svg></div></div>
<div class="gc" style="left:641px;width:100px;padding-left:3px">3</div>
</div>
<div class="gr" style="top:241px">
<div class="rh"></div>
<div class="gc" style="left:41px;width:100px;padding-left:3px">51</div>
<div class="gc" style="left:141px;width:100px;padding-left:3px">41</div>
<div class="gc" style="left:241px;width:100px">bulvaj</div>
<div class="gc" style="left:341px;width:100px">bul717</div>
<div class="gc" style="left:441px;width:100px"><div class="cb"><i></i><svg class="a" style="left:1px;top:1px" width="10" height="10" viewBox="0 0 10 10"><path d="M1.6 4.6 L4 8.2 L8.4 0.8" fill="none" stroke="#3f4c9c" stroke-width="2.1"/></svg></div></div>
<div class="gc" style="left:541px;width:100px"><div class="cb"><i></i><svg class="a" style="left:1px;top:1px" width="10" height="10" viewBox="0 0 10 10"><path d="M1.6 4.6 L4 8.2 L8.4 0.8" fill="none" stroke="#3f4c9c" stroke-width="2.1"/></svg></div></div>
<div class="gc" style="left:641px;width:100px;padding-left:3px">1</div>
</div>
<div class="gr" style="top:263px">
<div class="rh"></div>
<div class="gc" style="left:41px;width:100px;padding-left:3px">174</div>
<div class="gc" style="left:141px;width:100px;padding-left:3px">99</div>
<div class="gc" style="left:241px;width:100px">buresji1</div>
<div class="gc" style="left:341px;width:100px">ji28397</div>
<div class="gc" style="left:441px;width:100px"><div class="cb"><i></i><svg class="a" style="left:1px;top:1px" width="10" height="10" viewBox="0 0 10 10"><path d="M1.6 4.6 L4 8.2 L8.4 0.8" fill="none" stroke="#3f4c9c" stroke-width="2.1"/></svg></div></div>
<div class="gc" style="left:541px;width:100px"><div class="cb"><i></i><svg class="a" style="left:1px;top:1px" width="10" height="10" viewBox="0 0 10 10"><path d="M1.6 4.6 L4 8.2 L8.4 0.8" fill="none" stroke="#3f4c9c" stroke-width="2.1"/></svg></div></div>
<div class="gc" style="left:641px;width:100px;padding-left:3px">1</div>
</div>
<div class="a" style="left:8px;top:27px;width:0;height:0;border-top:5px solid transparent;border-bottom:5px solid transparent;border-left:5px solid #000"></div>
<div class="a" style="left:712px;top:1px;width:17px;height:282px;background:#f0f0f0"></div>
<div class="a" style="left:713px;top:19px;width:15px;height:14px;border:1px solid #979797;border-radius:2px;background:linear-gradient(90deg,#f4f4f4,#e2e2e2 50%,#cfcfcf)"></div>
<div class="a" style="left:716px;top:8px;width:0;height:0;border-left:4px solid transparent;border-right:4px solid transparent;border-bottom:4px solid #505050"></div>
<div class="a" style="left:716px;top:273px;width:0;height:0;border-left:4px solid transparent;border-right:4px solid transparent;border-top:4px solid #505050"></div>
<div class="a" style="left:1px;top:283px;width:728px;height:17px;background:#f0f0f0"></div>
<div class="a" style="left:19px;top:283px;width:408px;height:15px;border:1px solid #979797;border-radius:2px;background:linear-gradient(180deg,#f6f6f6,#e6e6e6 50%,#d2d2d2)"></div>
<div class="a" style="left:219px;top:287px;width:7px;height:7px;background:repeating-linear-gradient(90deg,#606060 0,#606060 1px,transparent 1px,transparent 3px)"></div>
<div class="a" style="left:7px;top:286px;width:0;height:0;border-top:4px solid transparent;border-bottom:4px solid transparent;border-right:4px solid #505050"></div>
<div class="a" style="left:702px;top:286px;width:0;height:0;border-top:4px solid transparent;border-bottom:4px solid transparent;border-left:4px solid #505050"></div>
</div>
</div>
<div class="a" style="left:-1px;top:701px;width:1000px;height:22px;background:#f1efef;border-top:1px solid #fafafa"></div>
<div class="t12" style="left:3px;top:706px;letter-spacing:-.6px">Ready</div>
<div class="a" style="left:994px;top:710px;width:2px;height:2px;background:#8c8c8c"></div>
<div class="a" style="left:990px;top:714px;width:2px;height:2px;background:#8c8c8c"></div>
<div class="a" style="left:994px;top:714px;width:2px;height:2px;background:#8c8c8c"></div>
<div class="a" style="left:986px;top:718px;width:2px;height:2px;background:#8c8c8c"></div>
<div class="a" style="left:990px;top:718px;width:2px;height:2px;background:#8c8c8c"></div>
<div class="a" style="left:994px;top:718px;width:2px;height:2px;background:#8c8c8c"></div>
<div class="a" style="left:-1px;top:721px;width:1000px;height:2px;background:#fbfbfb"></div>
</div></div>
</div>
</body></html>
